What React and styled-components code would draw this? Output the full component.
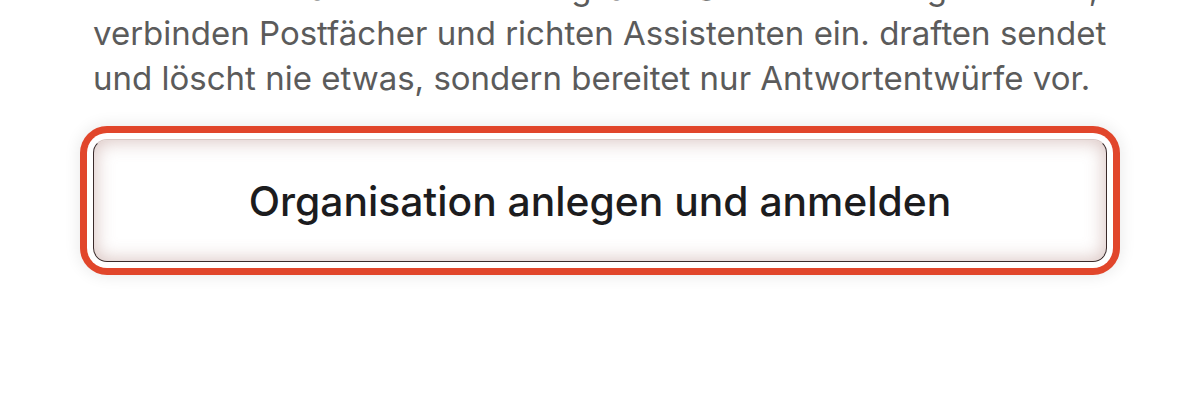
import React from "react";
import styled, { createGlobalStyle } from "styled-components";

const GlobalStyle = createGlobalStyle`
  html, body {
    margin: 0;
    padding: 0;
    background: #fff;
    overflow: hidden;
  }
  body {
    font-family: Inter, "Noto Sans", sans-serif;
  }
`;

const Page = styled.div`
  width: 1200px;
  height: 400px;
  overflow: hidden;
  box-sizing: border-box;
  padding: 0 93px;
`;

const Intro = styled.p`
  margin: -34px 0 0;
  font-size: 33px;
  line-height: 45px;
  color: #5b5b5b;
`;

const Lead = styled.span`
  white-space: nowrap;
`;

const SubmitButton = styled.button`
  display: flex;
  align-items: center;
  justify-content: center;
  width: 100%;
  height: 123px;
  margin-top: 38px;
  box-sizing: border-box;
  background: #fff;
  border: 1.5px solid #3a2a2a;
  border-top-color: #d9c9c6;
  border-radius: 14px;
  font-family: Inter, "Noto Sans", sans-serif;
  font-size: 40.8px;
  font-weight: 500;
  color: #1c1c1e;
  cursor: pointer;
  box-shadow:
    inset 0 0 18px 2px rgba(170, 120, 112, 0.42),
    0 0 0 6px #fff,
    0 0 0 13px #e1462b,
    0 0 16px 14px rgba(0, 0, 0, 0.09);
`;

export default function App() {
  return (
    <Page>
      <GlobalStyle />
      <Intro>
        <Lead>Im Anschluss an die Anmeldung laden Sie direkt Kolleginnen ein,</Lead>
        <br />
        verbinden Postfächer und richten Assistenten ein. draften sendet und löscht nie
        etwas, sondern bereitet nur Antwortentwürfe vor.
      </Intro>
      <SubmitButton type="button">Organisation anlegen und anmelden</SubmitButton>
    </Page>
  );
}
